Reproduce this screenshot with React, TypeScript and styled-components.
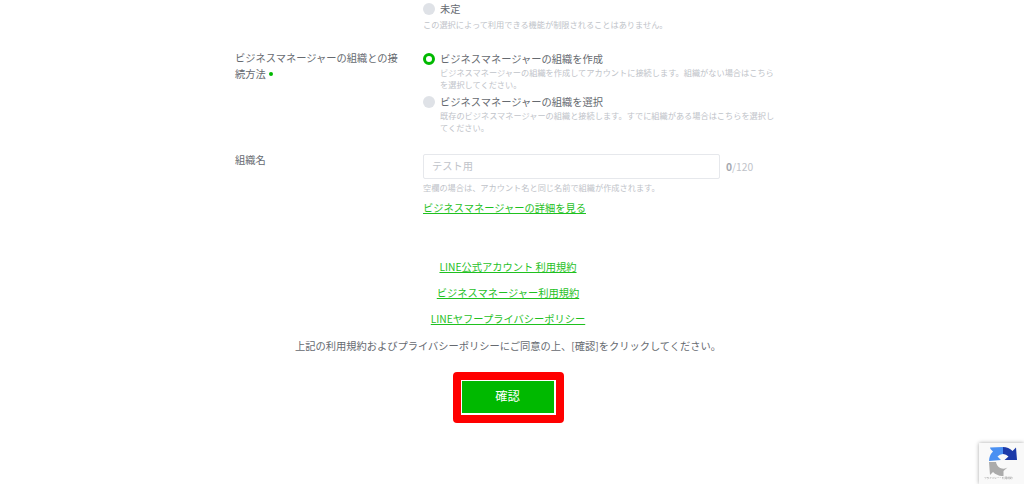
import React from "react";
import styled, { createGlobalStyle } from "styled-components";

const GlobalStyle = createGlobalStyle`
  html, body {
    margin: 0;
    height: 484px;
    overflow: hidden;
    background: #ffffff;
  }
  body {
    font-family: "Noto Sans CJK JP", "Noto Sans", sans-serif;
    color: #666a70;
  }
`;

export default function App() {
  return (
    <Page>
      <GlobalStyle />
      <Form>
        <FirstRow>
          <Label />
          <Field>
            <RadioOption>
              <Radio />
              <RadioText>未定</RadioText>
            </RadioOption>
            <OptionHelp>この選択によって利用できる機能が制限されることはありません。</OptionHelp>
          </Field>
        </FirstRow>
        <ConnectRow>
          <Label>
            ビジネスマネージャーの組織との接続方法 <Required />
          </Label>
          <Field>
            <RadioOption>
              <Radio $checked />
              <RadioText>ビジネスマネージャーの組織を作成</RadioText>
            </RadioOption>
            <RadioHelp>
              ビジネスマネージャーの組織を作成してアカウントに接続します。組織がない場合はこちらを選択してください。
            </RadioHelp>
            <RadioOption>
              <Radio />
              <RadioText>ビジネスマネージャーの組織を選択</RadioText>
            </RadioOption>
            <RadioHelp>
              既存のビジネスマネージャーの組織と接続します。すでに組織がある場合はこちらを選択してください。
            </RadioHelp>
          </Field>
        </ConnectRow>
        <Row>
          <NameLabel>組織名</NameLabel>
          <Field>
            <InputLine>
              <TextInput placeholder="テスト用" readOnly />
              <Counter>
                <b>0</b>/120
              </Counter>
            </InputLine>
            <InputHelp>空欄の場合は、アカウント名と同じ名前で組織が作成されます。</InputHelp>
            <DetailLink href="#">ビジネスマネージャーの詳細を見る</DetailLink>
          </Field>
        </Row>
      </Form>
      <Terms>
        <TermsLink href="#">LINE公式アカウント 利用規約</TermsLink>
        <TermsLink href="#">ビジネスマネージャー利用規約</TermsLink>
        <TermsLink href="#">LINEヤフープライバシーポリシー</TermsLink>
        <Agreement>上記の利用規約およびプライバシーポリシーにご同意の上、[確認]をクリックしてください。</Agreement>
        <Highlight>
          <ConfirmButton>確認</ConfirmButton>
        </Highlight>
      </Terms>
      <Recaptcha>
        <LogoMark width="28" height="29" viewBox="0 0 28 29">
          <path d="M14 0 L14 7 A7.5 7.5 0 0 0 8.5 9.5 L12 13 L0 14 A14 14 0 0 1 4 4.5 L1.5 2 L1 0.5 Z" fill="#4a90f2" />
          <path d="M14 0 A14 14 0 0 1 23.5 4 L27 0.5 L28 13 L15.5 13 L19.5 9.5 A7.5 7.5 0 0 0 14 7 Z" fill="#1c3aa9" />
          <path d="M0 15 L7 15 A7.5 7.5 0 0 0 18.5 20.5 L14.5 24 L14.5 29 A14 14 0 0 1 4 25 L1 28 Z" fill="#ababab" />
        </LogoMark>
        <RecaptchaText>プライバシー・利用規約</RecaptchaText>
      </Recaptcha>
    </Page>
  );
}

const Page = styled.div`
  width: 1024px;
  height: 484px;
  overflow: hidden;
`;

const Form = styled.div`
  width: 544px;
  margin-left: 235px;
`;

const Row = styled.div`
  display: grid;
  grid-template-columns: 188px 1fr;
`;

const FirstRow = styled(Row)`
  height: 50px;
`;

const ConnectRow = styled(Row)`
  height: 103px;
`;

const Label = styled.div`
  width: 170px;
  font-size: 10.25px;
  line-height: 16px;
  color: #666a70;
`;

const NameLabel = styled(Label)`
  line-height: 14px;
`;

const Required = styled.span`
  display: inline-block;
  width: 4px;
  height: 4px;
  border-radius: 50%;
  background: #00b900;
  vertical-align: 2px;
  margin-left: 1px;
`;

const Field = styled.div`
  min-width: 0;
  padding-top: 1px;
`;

const RadioOption = styled.div`
  display: flex;
  align-items: center;
  gap: 5px;
  height: 16px;
`;

const Radio = styled.span<{ $checked?: boolean }>`
  box-sizing: border-box;
  flex: none;
  width: 12px;
  height: 12px;
  border-radius: 50%;
  background: ${(p) => (p.$checked ? "#ffffff" : "#dfe2e7")};
  border: ${(p) => (p.$checked ? "3.5px solid #00b900" : "none")};
`;

const RadioText = styled.span`
  font-size: 10.25px;
  line-height: 16px;
  color: #666a70;
`;

const OptionHelp = styled.p`
  margin: 0;
  padding-top: 1px;
  font-size: 8.2px;
  line-height: 12px;
  color: #c0c3c9;
`;

const RadioHelp = styled(OptionHelp)`
  padding: 0 0 0 17px;
  margin: -1px 0 4px;
`;

const InputLine = styled.div`
  display: flex;
  align-items: center;
  gap: 6px;
`;

const TextInput = styled.input`
  box-sizing: border-box;
  width: 297px;
  height: 25px;
  padding: 0 8px 2px;
  border: 1px solid #e6e8ec;
  border-radius: 2px;
  outline: none;
  font-family: inherit;
  font-size: 10.25px;
  color: #666a70;

  &::placeholder {
    color: #c0c3c9;
  }
`;

const Counter = styled.span`
  font-size: 10.25px;
  color: #c0c3c9;

  b {
    color: #a5a9b0;
  }
`;

const InputHelp = styled.p`
  margin: 2px 0 0;
  font-size: 8.2px;
  line-height: 12px;
  color: #c0c3c9;
`;

const DetailLink = styled.a`
  display: block;
  margin-top: 7px;
  font-size: 10.25px;
  line-height: 16px;
  color: #1fc11f;
  text-decoration: underline;
`;

const Terms = styled.div`
  display: flex;
  flex-direction: column;
  align-items: center;
  margin-top: 43px;
  padding-right: 8px;
`;

const TermsLink = styled.a`
  font-size: 10.25px;
  line-height: 16px;
  margin-bottom: 10px;
  color: #1fc11f;
  text-decoration: underline;
`;

const Agreement = styled.p`
  margin: 1px 0 0;
  font-size: 10.25px;
  line-height: 16px;
  color: #666a70;
`;

const Highlight = styled.div`
  box-sizing: border-box;
  width: 111px;
  height: 51px;
  margin-top: 18px;
  border: 8px solid #ff0000;
  border-radius: 4px;
  background: #ffffff;
`;

const ConfirmButton = styled.button`
  display: block;
  box-sizing: border-box;
  width: 95px;
  height: 35px;
  padding: 0 0 2px;
  border: 1px solid #ffffff;
  border-right-width: 2px;
  border-bottom-width: 2px;
  background: #00b900;
  color: #ffffff;
  font-family: inherit;
  font-size: 12.3px;
  font-weight: 400;
`;

const Recaptcha = styled.div`
  position: fixed;
  right: 0;
  bottom: 0;
  box-sizing: border-box;
  width: 45px;
  height: 41px;
  padding: 4px 0 0 5px;
  background: #f9f9f9;
  box-shadow: 0 0 4px rgba(0, 0, 0, 0.35);
`;

const LogoMark = styled.svg`
  display: block;
  margin-left: 5px;
`;

const RecaptchaText = styled.div`
  font-size: 2.6px;
  line-height: 5px;
  white-space: nowrap;
  color: #8d8d8d;
`;
